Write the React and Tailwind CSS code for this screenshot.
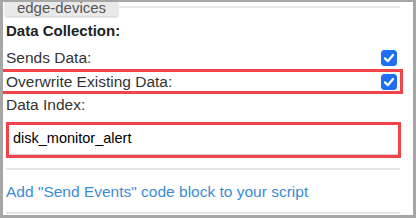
import React from 'react';

const Check = () => (
  <svg width="16" height="16" viewBox="0 0 16 16" className="shrink-0">
    <rect x="0" y="0" width="16" height="16" rx="3.5" fill="#1f6ff2" />
    <path d="M4 8.4 L6.8 11.2 L12 5" fill="none" stroke="#fff" strokeWidth="2.2" strokeLinecap="round" strokeLinejoin="round" />
  </svg>
);

const App = () => {
  return (
    <div className="w-[416px] h-[218px] overflow-hidden bg-white border-[#a6a6a6] border-x-[3px] border-t-[2px] border-b-[3px] font-['Liberation_Sans',Arial,sans-serif] flex flex-col">
      {/* tab + rule */}
      <div className="flex items-start h-[21px] -mt-[2px] shrink-0">
        <div className="ml-[2px] w-[113px] h-[16px] bg-[#e9e9e9] shadow-[0_1px_2px_rgba(0,0,0,0.22)] text-[#555] text-[15px] leading-[16px] text-center">
          edge-devices
        </div>
        <div className="flex-1 mt-[6px] h-[2px] bg-[#e9e9e9] mr-[13px]" />
      </div>

      <div className="pl-[3px] h-[20px] leading-[20px] text-[15px] font-bold text-[#222] shrink-0">Data Collection:</div>

      {/* Sends data */}
      <div className="mt-[6px] h-[22px] pl-[3px] mr-[16px] flex items-center justify-between text-[15.5px] text-[#333] shrink-0">
        <span>Sends Data:</span>
        <Check />
      </div>

      {/* Overwrite row (highlighted) */}
      <div className="-ml-[3px] mr-[10px] h-[25px] border-[3px] border-[#f2434b] pl-[3px] pr-[3px] flex items-center justify-between text-[15.5px] text-[#333] shrink-0">
        <span>Overwrite Existing Data:</span>
        <Check />
      </div>

      <div className="mt-[1px] pl-[3px] h-[20px] leading-[20px] text-[15.5px] text-[#333] shrink-0">Data Index:</div>

      {/* input (highlighted) */}
      <div className="mt-[7px] ml-[3px] mr-[12px] h-[36px] border-[3px] border-[#f2434b] shrink-0">
        <div className="h-[30px] border-b border-[#cfcfcf] pl-[4px] pb-[2px] flex items-center text-[14.5px] text-black">
          disk_monitor_alert
        </div>
      </div>

      <div className="mt-[10px] ml-[3px] mr-[13px] h-[2px] bg-[#e6e6e6] shrink-0" />

      <div className="mt-[12px] pl-[3px] h-[20px] leading-[20px] text-[15.5px] text-[#3d8cd3] shrink-0">
        Add "Send Events" code block to your script
      </div>

      <div className="mt-[10px] ml-[3px] mr-[13px] h-[2px] bg-[#e6e6e6] shrink-0" />
    </div>
  );
};

export default App;
